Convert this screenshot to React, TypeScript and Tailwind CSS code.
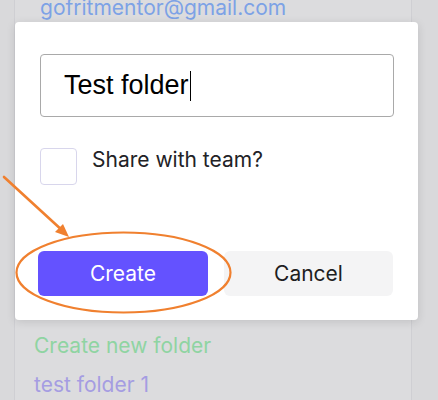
const font = "font-['Inter',_'Noto_Sans',_sans-serif]";

export default function App() {
  return (
    <div className={`relative w-[438px] h-[400px] overflow-hidden bg-[#d9d9db] ${font}`}>
      {/* Sidebar behind the dialog */}
      <div className="ml-[14px] w-[398px] h-full bg-[#dcdcde] border-x border-[#cfcfd3] flex flex-col">
        <div className="pl-[25px] -mt-[5px] text-[21px] leading-[26px] text-[#7da2e6]">
          gofritmentor@gmail.com
        </div>
        <div className="flex-1" />
        <div className="pl-[19px] flex flex-col gap-[13px] pb-[2px]">
          <div className="text-[21px] leading-[26px] text-[#8fd4a2]">Create new folder</div>
          <div className="text-[21px] leading-[26px] text-[#a59de2]">test folder 1</div>
        </div>
      </div>

      {/* Dialog */}
      <div className="absolute left-[15px] top-[22px] w-[403px] h-[298px] bg-white rounded-[4px] shadow-[0_2px_10px_rgba(0,0,0,0.12)] px-[25px] pt-[32px]">
        <div className="h-[63px] w-[354px] border border-[#a9a9a9] rounded-[4px] flex items-center pl-[23px]">
          <span className="font-['Liberation_Sans',_Arial,_sans-serif] text-[27px] text-black">Test folder</span>
          <span className="w-px h-[30px] bg-black ml-[1px]" />
        </div>

        <div className="mt-[31px] flex items-start gap-[15px]">
          <div className="w-[37px] h-[37px] border border-[#d8d6ec] rounded-[4px]" />
          <span className="-mt-[1px] text-[21px] leading-[26px] text-[#222226]">Share with team?</span>
        </div>

        <div className="mt-[66px] -ml-[2px] flex gap-[16px]">
          <button className="w-[171px] h-[45px] rounded-[6px] bg-[#6452ff] text-white text-[21px]">
            Create
          </button>
          <button className="w-[170px] h-[45px] rounded-[6px] bg-[#f4f4f5] text-[#1e1e22] text-[21px]">
            Cancel
          </button>
        </div>
      </div>

      {/* Annotation: arrow and ellipse */}
      <svg className="absolute left-0 top-0" width="438" height="400" viewBox="0 0 438 400">
        <ellipse cx="123.5" cy="272.5" rx="107" ry="40" fill="none" stroke="#f0802f" strokeWidth="2.2" />
        <line x1="4" y1="177" x2="64" y2="232" stroke="#f0802f" strokeWidth="2.6" strokeLinecap="round" />
        <polygon points="69,237 55,232 63,224" fill="#f0802f" />
      </svg>
    </div>
  );
}
